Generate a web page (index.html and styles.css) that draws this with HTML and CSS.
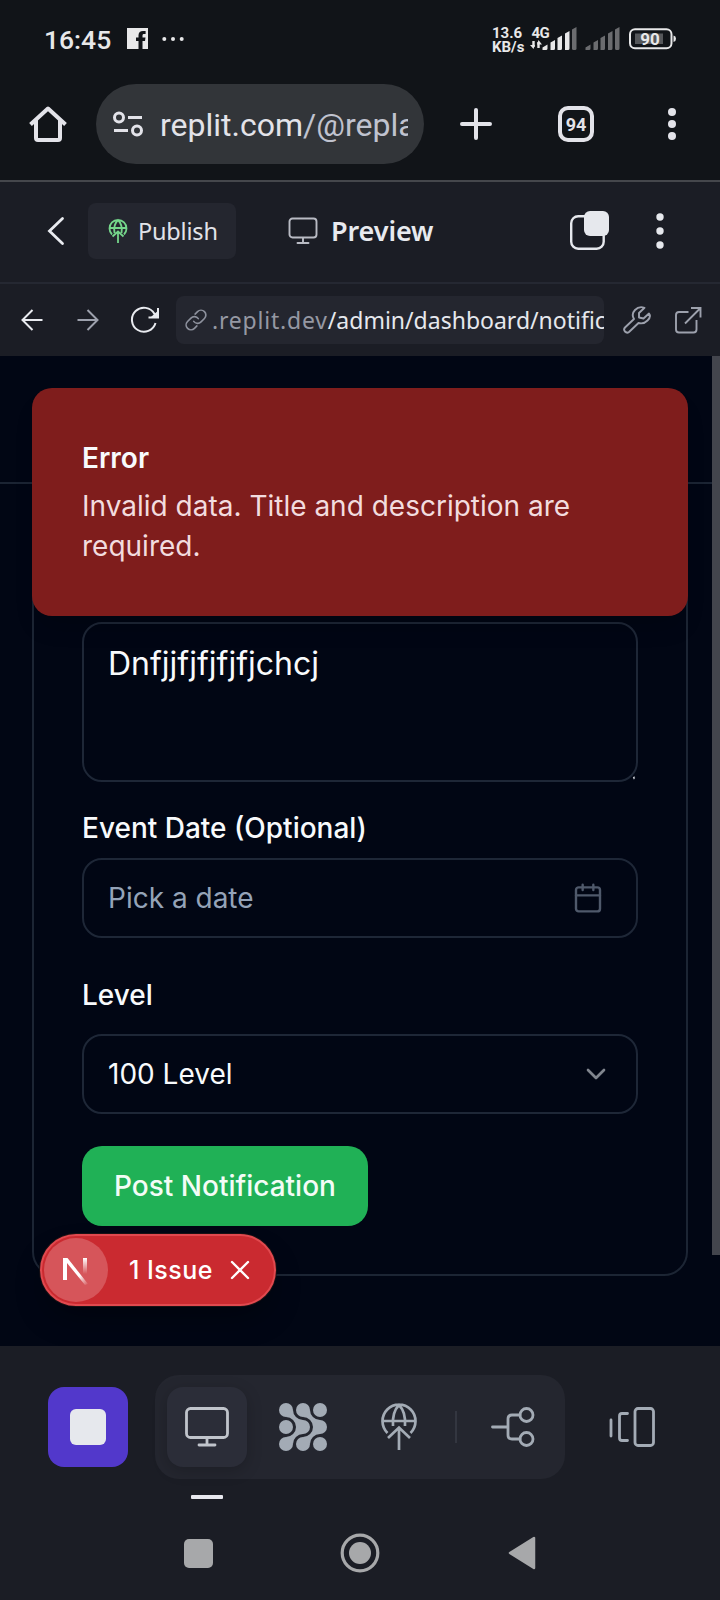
FILE: index.html
```html
<!DOCTYPE html>
<html lang="en">
<head>
<meta charset="utf-8">
<title>Preview</title>
<link rel="stylesheet" href="styles.css">
</head>
<body>
<div class="status">
  <span class="clock">16:45</span>
  <svg class="fb" width="21" height="21" viewBox="0 0 21 21"><path fill="#e8e8e9" d="M0 0H21V21H15.500V13H18L18.500 9.500H15.500V7.500C15.500 6.500 16 6 17 6H18.600V3H16C13.200 3 11.500 4.500 11.500 7.300V9.500H9V13H11.500V21H0Z"/></svg>
  <svg class="more" width="22" height="6" viewBox="0 0 22 6" fill="#e8e8e9"><circle cx="2.300" cy="3" r="2"/><circle cx="11" cy="3" r="2"/><circle cx="19.700" cy="3" r="2"/></svg>
  <span class="speed">13.6<br>KB/s</span>
  <svg class="signal" width="48" height="26" viewBox="0 0 48 26">
    <text class="net" x="1.500" y="11.500">4G</text>
    <path d="M3.500 15V21M8.500 16V22" stroke="#e8e8e9" stroke-width="2.400"/><path d="M0 19H5L3.500 23ZM7 18.500H12L8.500 14Z" fill="#e8e8e9"/>
    <path fill="#e8e8e9" d="M12.500 24V21.500Q15 20 17.500 18.500V22.500Q17.500 24 16 24ZM20.500 24V16.500L25 14V22.500Q25 24 23.500 24ZM27.500 24V12L32 9.500V22.500Q32 24 30.500 24ZM35 24V7.500L39.500 5V22.500Q39.500 24 38 24Z"/><path fill="#6b6c6f" d="M42 22.500V3.500L46.500 1V22.500Q46.500 24 45 24H43.500Q42 24 42 22.500Z"/>
  </svg>
  <svg class="signal2" width="36" height="26" viewBox="0 0 36 26" fill="#6b6c6f"><path d="M.5 24V21.500Q3 20 5.500 18.500V22.500Q5.500 24 4 24ZM8.500 24V16.500L13 14V22.500Q13 24 11.500 24ZM15.500 24V12L20 9.500V22.500Q20 24 18.500 24ZM23 24V7.500L27.500 5V22.500Q27.500 24 26 24ZM30 22.500V3.500L34.500 1V22.500Q34.500 24 33 24H31.500Q30 24 30 22.500Z"/></svg>
  <svg class="battery" width="48" height="22" viewBox="0 0 48 22"><rect x="1" y="1.200" width="41.500" height="19" rx="5" fill="none" stroke="#e8e8e9" stroke-width="2"/><rect x="6" y="5.500" width="28" height="10.500" fill="#55575a"/><path d="M44.500 7.500Q47 8 47 10.700T44.500 14Z" fill="#e8e8e9"/><text class="charge" x="21" y="17" text-anchor="middle">90</text></svg>
</div>

<div class="browser">
  <svg class="home" width="40" height="40" viewBox="0 0 40 40" fill="none" stroke="#e3e3e9" stroke-width="4" stroke-linejoin="round"><path d="M2.500 20.500L20 4.500L37.500 20.500"/><path d="M8 16V34Q8 36 10 36H30Q32 36 32 34V16"/></svg>
  <div class="omnibox">
    <svg width="30" height="26" viewBox="0 0 30 26" fill="none" stroke="#e3e3e9" stroke-width="3"><circle cx="6" cy="6.500" r="4.500"/><path d="M15 6.500H29M1 19.500H15"/><circle cx="24" cy="19.500" r="4.500"/></svg>
    <span class="address">replit.com<span class="dim">/@replar</span></span>
  </div>
  <svg class="plus" width="32" height="32" viewBox="0 0 32 32" stroke="#e3e3e9" stroke-width="4" stroke-linecap="round"><path d="M2 16H30M16 2V30"/></svg>
  <span class="tabs">94</span>
  <svg class="menu" width="8" height="32" viewBox="0 0 8 32" fill="#e3e3e9"><circle cx="4" cy="4" r="4"/><circle cx="4" cy="16" r="4"/><circle cx="4" cy="28" r="4"/></svg>
</div>

<div class="apphead">
  <svg class="back" width="18" height="30" viewBox="0 0 18 30" fill="none" stroke="#e9ebf0" stroke-width="2.800" stroke-linecap="round"><path d="M15.500 2.500L2.500 15L15.500 27.500"/></svg>
  <div class="publish">
    <svg width="20" height="26" viewBox="0 0 20 26" fill="none" stroke="#75d68b" stroke-width="1.800"><path d="M4 16.500A8.500 8.500 0 1 1 16 16.500M1.500 10H18.500M6.500 15Q5 7 10 2Q15 7 13.500 15M10 25V14M4.500 18.500L10 13.500L15.500 18.500"/></svg>
    <span>Publish</span>
  </div>
  <svg class="screen" width="30" height="28" viewBox="0 0 30 28" fill="none" stroke="#b9bbc4" stroke-width="1.900" stroke-linecap="round"><rect x="1.500" y="1.500" width="27" height="19" rx="3"/><path d="M15 21V26M9.500 26H20.500"/></svg>
  <span class="title">Preview</span>
  <svg class="overlap" width="40" height="40" viewBox="0 0 40 40"><rect x="1.200" y="5.200" width="32.500" height="32.500" rx="7" fill="none" stroke="#e6e8ed" stroke-width="2.400"/><rect x="14" y="0" width="25" height="25" rx="6" fill="#e6e8ed"/></svg>
  <svg class="kebab" width="8" height="36" viewBox="0 0 8 36" fill="#e6e8ed"><circle cx="4" cy="4" r="3.700"/><circle cx="4" cy="18" r="3.700"/><circle cx="4" cy="32" r="3.700"/></svg>
</div>

<div class="webnav">
  <svg class="prev" width="22" height="22" viewBox="0 0 22 22" fill="none" stroke="#e9ebf0" stroke-width="2"><path d="M21.500 11H1.500M11.500 1L1.500 11L11.500 21"/></svg>
  <svg class="next" width="22" height="22" viewBox="0 0 22 22" fill="none" stroke="#9da1ad" stroke-width="2"><path d="M.5 11H20.500M10.500 1L20.500 11L10.500 21"/></svg>
  <svg class="reload" width="30" height="28" viewBox="0 0 30 28" fill="none" stroke="#e9ebf0" stroke-width="2"><path d="M25.500 17A12 12 0 1 1 24.500 8L28 11.500M28 2V11.500H18.500"/><path d="M23 10.500L27 7V10.500Z" fill="#e9ebf0"/></svg>
  <div class="urlbox">
    <svg width="22" height="22" viewBox="0 0 24 24" fill="none" stroke="#8d919d" stroke-width="1.800" stroke-linecap="round" stroke-linejoin="round"><path d="M9.500 13.500a5.300 5.300 0 0 0 8 .6l3.700-3.700A5.300 5.300 0 0 0 13.700 2.900L11 5.500M14.500 10.500a5.300 5.300 0 0 0-8-.6L2.800 13.600A5.300 5.300 0 0 0 10.300 21.100L13 18.500"/></svg>
    <span class="host">.replit.dev</span><span class="path">/admin/dashboard/notifications</span>
  </div>
  <svg class="wrench" width="28" height="28" viewBox="0 0 28 28" fill="none" stroke="#9da1ad" stroke-width="1.900" stroke-linejoin="round"><path d="M21.500 1.800Q16 -.2 12 4T11 13L2 21.500Q.2 23.500 2 25.500T6 26L15.500 17Q20.500 18.500 24.500 14.500T26 7.500L20.500 12.500L16 11.500V7Z"/></svg>
  <svg class="external" width="27" height="28" viewBox="0 0 27 28" fill="none" stroke="#9da1ad" stroke-width="1.900"><path d="M13.500 6H4Q1 6 1 9V23.500Q1 26.500 4 26.500H18.500Q21.500 26.500 21.500 23.500V14M16 2H25.500V11.500M25.500 2L10 17.500"/></svg>
</div>

<main class="page">
  <header class="pagehead"></header>
  <section class="card">
    <div class="textarea">Dnfjjfjfjfjfjchcj<svg class="grip" width="4" height="4" viewBox="0 0 4 4"><path d="M1 1.500L3 1M1.500 3L2.500 2" stroke="#c5c9d0" stroke-width="1.200"/></svg></div>
    <label class="label">Event Date (Optional)</label>
    <div class="field muted"><span>Pick a date</span>
      <svg width="32" height="32" viewBox="0 0 24 24" fill="none" stroke="#4f596b" stroke-width="1.800" stroke-linecap="round" stroke-linejoin="round"><path d="M8 2v4M16 2v4M3 10h18"/><rect x="3" y="4" width="18" height="18" rx="2"/></svg></div>
    <label class="label level">Level</label>
    <div class="field select"><span>100 Level</span>
      <svg width="32" height="32" viewBox="0 0 24 24" fill="none" stroke="#80858e" stroke-width="2" stroke-linecap="round" stroke-linejoin="round"><path d="M6 9l6 6 6-6"/></svg></div>
    <button class="submit">Post Notification</button>
  </section>
  <div class="toast"><div class="toast-title">Error</div><div class="toast-text">Invalid data. Title and description are required.</div></div>
  <div class="issue">
    <span class="badge"><svg width="28" height="30" viewBox="0 0 28 30"><defs><linearGradient id="n1" x1="0" y1="0" x2="1" y2="1"><stop offset=".65" stop-color="#fff"/><stop offset="1" stop-color="#fff" stop-opacity="0"/></linearGradient><linearGradient id="n2" x1="0" y1="0" x2="0" y2="1"><stop offset="0" stop-color="#fff"/><stop offset="1" stop-color="#fff" stop-opacity="0"/></linearGradient></defs><path d="M1 3H5.500L26 29L23 30L5 8V25H1Z" fill="url(#n1)"/><rect x="21" y="3" width="4" height="16" fill="url(#n2)"/></svg></span>
    <span class="issue-text">1 Issue</span>
    <svg width="20" height="20" viewBox="0 0 20 20" stroke="#fff" stroke-width="2.400" stroke-linecap="round"><path d="M2 2L18 18M18 2L2 18"/></svg>
  </div>
  <div class="thumb"></div>
</main>

<footer class="dock">
  <div class="tools">
    <div class="stop"><i></i></div>
    <div class="group">
      <div class="tile"><svg width="44" height="40" viewBox="0 0 44 40" fill="none" stroke="#c0c4cb" stroke-width="2.800" stroke-linecap="round"><rect x="1.500" y="1.500" width="41" height="29" rx="4"/><path d="M22 31V38M14 38H30"/></svg></div>
      <svg class="agent" width="48" height="48" viewBox="0 0 48 48" fill="#a3abb5"><circle cx="7" cy="7" r="7"/><circle cx="24" cy="7" r="7"/><circle cx="41" cy="7" r="7"/><circle cx="7" cy="24" r="7"/><circle cx="24" cy="24" r="7"/><circle cx="41" cy="24" r="7"/><circle cx="7" cy="41" r="7"/><circle cx="24" cy="41" r="7"/><circle cx="41" cy="41" r="7"/><path d="M14 7A10 10 0 0 0 24 17V31A10 10 0 0 0 14 41L7 34A10 10 0 0 0 7 14Z"/><path d="M31 7A10 10 0 0 0 41 17V31A10 10 0 0 0 31 41L24 34A10 10 0 0 0 24 14Z"/></svg>
      <svg class="globe" width="36" height="48" viewBox="0 0 36 48" fill="none" stroke="#a3abb5" stroke-width="2.700"><path d="M6.500 30A16.500 16.500 0 1 1 29.500 30M2 18H34M12 23Q11 9 18 2Q25 9 24 23M18 47V25M7 35L18 24.500L29 35"/></svg>
      <span class="rule"></span>
      <svg class="branch" width="44" height="40" viewBox="0 0 44 40" fill="none" stroke="#a3abb5" stroke-width="2.800" stroke-linecap="round"><path d="M1.500 20H17M29 8H21Q17 8 17 12V28Q17 32 21 32H29"/><circle cx="35.500" cy="8" r="6.500"/><circle cx="35.500" cy="32" r="6.500"/></svg>
    </div>
    <svg class="panels" width="46" height="40" viewBox="0 0 46 40" fill="none" stroke="#a3abb5" stroke-width="2.800" stroke-linecap="round"><path d="M2 13V29M18.500 6.500H13Q10.500 6.500 10.500 9V31Q10.500 33.500 13 33.500H18.500"/><rect x="26" y="1.500" width="18.500" height="37" rx="3"/></svg>
  </div>
  <div class="dash"></div>
  <div class="sysnav">
    <span class="recent"></span>
    <svg class="circle" width="40" height="40" viewBox="0 0 40 40"><circle cx="20" cy="20" r="17.800" fill="none" stroke="#a7a8aa" stroke-width="3.200"/><circle cx="20" cy="20" r="11" fill="#a7a8aa"/></svg>
    <svg class="tri" width="28" height="34" viewBox="0 0 28 34"><path d="M26 2V32L2 17Z" fill="#a7a8aa" stroke="#a7a8aa" stroke-width="2.500" stroke-linejoin="round"/></svg>
  </div>
</footer>
</body>
</html>
```

FILE: styles.css
```css
* { box-sizing: border-box; }
body { margin: 0; width: 720px; height: 1600px; overflow: hidden; background: #1b1d25; font-family: Inter, "Liberation Sans", sans-serif; color: #f8fafc; }
svg { display: block; flex: none; }

.status { height: 78px; display: flex; align-items: center; background: #111418; font-family: Roboto, sans-serif; color: #e8e8e9; }
.clock { margin-left: 44px; width: 83px; font-size: 26.500px; font-weight: 500; line-height: 30px; padding-top: 2px; }
.fb { margin-top: -1px; }
.more { margin-left: 14px; }
.speed { margin-left: 308px; width: 38px; padding-top: 2px; font-size: 15px; line-height: 14.500px; font-weight: 700; white-space: nowrap; }
.net { font: 700 15px Roboto, sans-serif; letter-spacing: -.5px; fill: #e8e8e9; }
.signal2 { margin-left: 7px; }
.battery { margin-left: 8px; }
.charge { font: 700 17px Roboto, sans-serif; fill: #e8e8e9; }

.browser { height: 104px; display: flex; align-items: center; padding: 6px 0 16px 28px; background: #111418; border-bottom: 2px solid #45474c; font-family: Roboto, sans-serif; }
.omnibox { margin-left: 28px; width: 328px; height: 80px; padding: 0 16px 0 17px; border-radius: 40px; background: #323539; display: flex; align-items: center; gap: 17px; }
.address { flex: 1; overflow: hidden; white-space: nowrap; padding-top: 2px; font-size: 32px; line-height: 44px; color: #e3e3e9; }
.dim { color: #c0c3cf; }
.plus { margin-left: 36px; }
.tabs { margin-left: 66px; width: 36px; height: 36px; border: 4px solid #e3e3e9; border-radius: 10px; text-align: center; font-size: 18px; font-weight: 700; line-height: 29px; color: #e3e3e9; }
.menu { margin-left: 74px; }

.apphead { height: 102px; display: flex; align-items: center; padding: 0 0 2px 47px; border-bottom: 2px solid #252832; font-family: "Noto Sans", sans-serif; }
.publish { margin-left: 23px; width: 148px; height: 56px; border-radius: 8px; background: #24262f; padding-left: 20px; display: flex; align-items: center; gap: 10px; font-size: 23.500px; letter-spacing: -.2px; color: #e1e3e9; }
.screen { margin-left: 52px; }
.title { margin: -2px 0 0 13px; width: 109px; font-size: 27px; font-weight: 600; letter-spacing: -.1px; color: #e8eaef; }
.overlap { margin-left: 130px; }
.kebab { margin-left: 46px; }

.webnav { height: 72px; display: flex; align-items: center; padding-left: 21px; font-family: "Noto Sans", sans-serif; }
.next { margin-left: 34px; }
.reload { margin-left: 31px; }
.urlbox { margin-left: 16px; width: 428px; height: 48px; padding-left: 9px; border-radius: 8px; background: #24262f; display: flex; align-items: center; overflow: hidden; white-space: nowrap; font-size: 23px; color: #e6e8ed; }
.host { margin-left: 5px; width: 118px; color: #9598a3; letter-spacing: .8px; }
.wrench { margin-left: 19px; }
.external { margin-left: 24px; }

.page { position: relative; height: 990px; background: #010614; overflow: hidden; }
.pagehead { height: 128px; border-bottom: 2px solid #1b2433; }
.card { margin: 32px 32px 0; width: 656px; height: 760px; padding: 104px 48px 0; border: 2px solid #1c2534; border-radius: 24px; display: flex; flex-direction: column; align-items: flex-start; }
.textarea { position: relative; width: 556px; height: 160px; padding: 16px 24px; border: 2px solid #1e2737; border-radius: 20px; font-size: 32px; line-height: 48px; }
.grip { position: absolute; right: 0; bottom: 0; }
.label { margin-top: 32px; font-size: 28px; line-height: 28px; font-weight: 500; }
.field { margin-top: 16px; width: 556px; height: 80px; padding: 0 32px 0 24px; border: 2px solid #1e2737; border-radius: 20px; display: flex; align-items: center; justify-content: space-between; font-size: 28px; }
.muted { color: #94a3b8; }
.level { margin-top: 43px; }
.select { margin-top: 25px; padding-right: 24px; }
.submit { margin-top: 32px; width: 286px; height: 80px; padding: 0; border: 0; border-radius: 20px; background: #20b156; color: #f3fcf6; font: 500 28px Inter, sans-serif; }
.toast { position: absolute; left: 32px; top: 32px; width: 656px; height: 228px; padding: 50px; border-radius: 20px; background: #7f1d1c; box-shadow: 0 16px 24px -8px rgba(0, 0, 0, .2); font-size: 28px; line-height: 40px; }
.toast-title { font-weight: 600; }
.toast-text { margin-top: 8px; color: #f2dcdf; }
.issue { position: absolute; left: 40px; top: 878px; width: 236px; height: 72px; padding: 2px; border: 2px solid #e1494f; border-radius: 36px; background: #ca2a30; display: flex; align-items: center; box-shadow: 0 0 0 1px #1a1114, 0 16px 32px -8px rgba(0, 0, 0, .4); }
.badge { width: 64px; height: 64px; border-radius: 50%; background: #d6555a; display: flex; align-items: center; justify-content: center; }
.issue-text { margin-left: 21px; width: 101px; font-size: 25px; font-weight: 500; letter-spacing: .5px; color: #fff; }
.thumb { position: absolute; right: 0; top: 0; width: 8px; height: 899px; background: #43454d; }

.dock { height: 254px; padding-top: 29px; }
.tools { height: 104px; display: flex; align-items: center; padding-left: 48px; }
.stop { width: 80px; height: 80px; border-radius: 16px; background: #5238cb; display: flex; align-items: center; justify-content: center; }
.stop i { width: 36px; height: 36px; border-radius: 6px; background: #e6e8ed; }
.group { margin-left: 27px; width: 410px; height: 104px; padding-left: 12px; border-radius: 24px; background: #24262f; display: flex; align-items: center; }
.tile { width: 80px; height: 80px; border-radius: 16px; background: #2b2d38; box-shadow: 0 4px 16px rgba(0, 0, 0, .2); display: flex; align-items: center; justify-content: center; }
.agent { margin-left: 32px; }
.globe { margin-left: 54px; }
.rule { margin-left: 38px; width: 2px; height: 32px; background: #333640; }
.branch { margin-left: 34px; }
.panels { margin-left: 44px; }
.dash { margin: 16px 0 0 191px; width: 32px; height: 4px; border-radius: 1px; background: #e8e8ef; }
.sysnav { height: 108px; display: flex; align-items: center; padding-left: 184px; }
.recent { width: 29px; height: 29px; border-radius: 5px; background: #a7a8aa; }
.circle { margin-left: 127px; }
.tri { margin-left: 128px; }
```
